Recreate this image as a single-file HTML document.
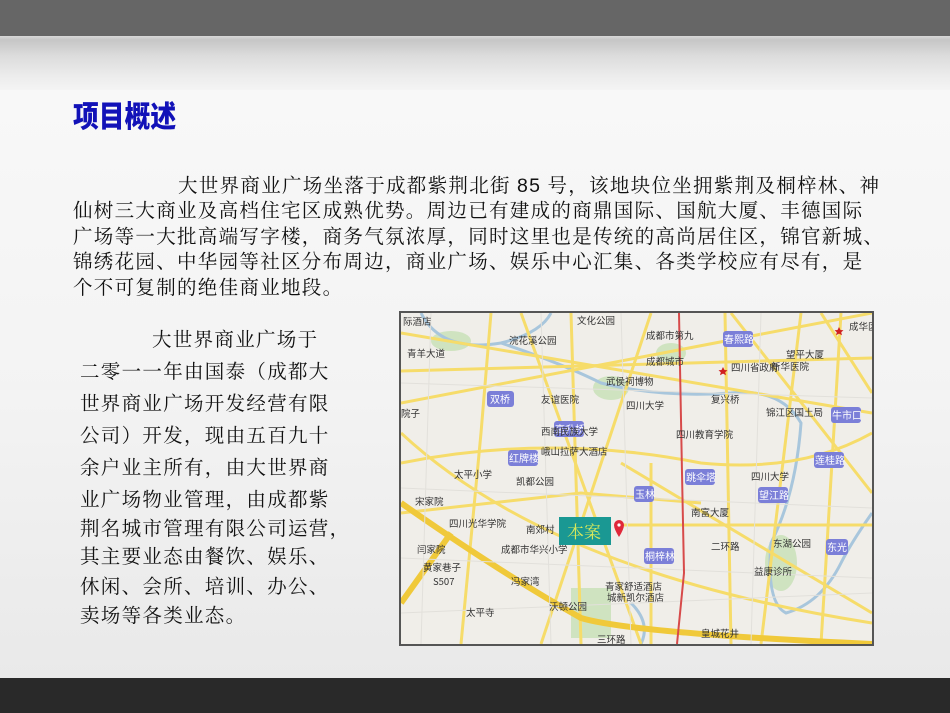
<!DOCTYPE html>
<html><head><meta charset="utf-8"><style>
html,body{margin:0;padding:0}
body{width:950px;height:713px;position:relative;overflow:hidden;background:linear-gradient(#f8f8f8 90px,#f3f3f3 400px,#e9e9e9 678px);font-family:"Liberation Serif","Noto Serif CJK SC",serif;color:#111}
#top1{position:absolute;left:0;top:0;width:950px;height:36px;background:#666}
#top2{position:absolute;left:0;top:36px;width:950px;height:54px;background:linear-gradient(#d8d8d8 0px,#c6c6c6 4px,#dcdcdc 20px,#ececec 40px,#f4f4f4 54px)}
#bot{position:absolute;left:0;top:678px;width:950px;height:35px;background:#292929}
h1{position:absolute;left:73px;top:92px;margin:0;font:900 30px "Noto Sans CJK SC",sans-serif;color:#1212b8;transform:scaleX(0.86);transform-origin:left}
.p{position:absolute;left:73px;font-size:19.5px;letter-spacing:1.3px;white-space:nowrap;line-height:26px}
.l{position:absolute;left:80px;font-size:19.5px;letter-spacing:1.3px;white-space:nowrap;line-height:30px}
.n{font-family:"Liberation Sans",sans-serif}
#map{position:absolute;left:399px;top:311px;width:471px;height:331px;border:2px solid #555;overflow:hidden;background:#f0eee9}
.lab{font:9.5px "Noto Sans CJK SC",sans-serif;fill:#333}
.st{font:10px "Noto Sans CJK SC",sans-serif;fill:#fff}
</style></head><body>
<div id="top1"></div><div id="top2"></div><div id="bot"></div>
<h1>项目概述</h1>
<div class="p" style="top:173px;left:178px">大世界商业广场坐落于成都紫荆北街 <span class="n">85</span> 号，该地块位坐拥紫荆及桐梓林、神</div>
<div class="p" style="top:199px">仙树三大商业及高档住宅区成熟优势。周边已有建成的商鼎国际、国航大厦、丰德国际</div>
<div class="p" style="top:225px">广场等一大批高端写字楼，商务气氛浓厚，同时这里也是传统的高尚居住区，锦官新城、</div>
<div class="p" style="top:250px">锦绣花园、中华园等社区分布周边，商业广场、娱乐中心汇集、各类学校应有尽有，是</div>
<div class="p" style="top:276px">个不可复制的绝佳商业地段。</div>
<div class="l" style="top:326px;left:152px">大世界商业广场于</div>
<div class="l" style="top:358px">二零一一年由国泰（成都大</div>
<div class="l" style="top:390px">世界商业广场开发经营有限</div>
<div class="l" style="top:422px">公司）开发，现由五百九十</div>
<div class="l" style="top:454px">余户业主所有，由大世界商</div>
<div class="l" style="top:486px">业广场物业管理，由成都紫</div>
<div class="l" style="top:515px">荆名城市管理有限公司运营，</div>
<div class="l" style="top:543px">其主要业态由餐饮、娱乐、</div>
<div class="l" style="top:573px">休闲、会所、培训、办公、</div>
<div class="l" style="top:602px">卖场等各类业态。</div>
<div id="map"><svg width="471" height="331" viewBox="0 0 471 331">
<g fill="#cfe3c0"><ellipse cx="50" cy="28" rx="20" ry="10"/><ellipse cx="210" cy="75" rx="18" ry="12"/><ellipse cx="380" cy="250" rx="16" ry="28"/><rect x="170" y="275" width="40" height="50"/><ellipse cx="270" cy="40" rx="15" ry="10"/></g>
<g fill="none" stroke="#a8c6dc" stroke-width="3"><path d="M20 0 Q40 40 100 30 Q140 20 150 0"/><path d="M100 30 Q160 50 200 70 Q260 85 330 80 Q380 75 400 110 Q395 180 370 230 Q365 290 385 300 Q420 290 440 250 Q450 230 471 200"/><path d="M230 290 Q250 310 240 331"/></g>
<g fill="none" stroke="#f6dc6a" stroke-width="3">
<path d="M0 58 L471 45"/><path d="M0 150 Q150 120 300 150 Q400 160 471 120"/><path d="M220 212 L471 212"/><path d="M90 0 L80 120 L60 331"/><path d="M170 0 L180 331"/><path d="M324 0 L330 331"/><path d="M400 0 L360 331"/><path d="M0 90 L471 0"/><path d="M0 200 L180 180 L300 190"/><path d="M0 120 Q150 260 471 310"/><path d="M250 0 L140 331"/><path d="M420 0 L471 80"/><path d="M0 20 L471 100"/><path d="M220 150 L471 300"/><path d="M330 0 L471 180"/><path d="M120 0 L240 331"/><path d="M250 150 L250 331"/><path d="M440 0 L420 331"/>
</g>
<g fill="none" stroke="#f0c93a" stroke-width="6"><path d="M0 190 Q100 260 180 305 Q230 320 471 331"/><path d="M0 290 L50 220"/></g>
<g fill="none" stroke="#e2e0db" stroke-width="1"><path d="M0 70 L471 85 M0 175 L471 195 M140 0 L150 331 M220 0 L230 331 M360 0 L350 331 M0 245 L471 265 M30 0 L20 331 M0 300 L471 280"/></g>
<path d="M278 0 L281 160 L283 260 L276 331" stroke="#d74a4a" stroke-width="2" fill="none"/>
<g fill="#7b7fd8"><rect x="86" y="78" width="27" height="16" rx="3"/><rect x="153" y="108" width="30" height="16" rx="3"/><rect x="107" y="137" width="30" height="16" rx="3"/><rect x="322" y="18" width="30" height="16" rx="3"/><rect x="233" y="173" width="20" height="16" rx="3"/><rect x="284" y="156" width="30" height="16" rx="3"/><rect x="243" y="235" width="30" height="16" rx="3"/><rect x="357" y="174" width="30" height="16" rx="3"/><rect x="430" y="94" width="30" height="16" rx="3"/><rect x="413" y="139" width="30" height="16" rx="3"/><rect x="425" y="226" width="22" height="16" rx="3"/></g>
<g class="st"><text x="89" y="90">双桥</text><text x="154" y="120">高升桥</text><text x="108" y="149">红牌楼</text><text x="323" y="30">春熙路</text><text x="234" y="185">玉林</text><text x="285" y="168">跳伞塔</text><text x="244" y="247">桐梓林</text><text x="358" y="186">望江路</text><text x="431" y="106">牛市口</text><text x="414" y="151">莲桂路</text><text x="426" y="238">东光</text></g>
<g class="lab"><text x="2" y="12">际酒店</text><text x="176" y="11">文化公园</text><text x="108" y="31">浣花溪公园</text><text x="6" y="44">青羊大道</text><text x="245" y="26">成都市第九</text><text x="245" y="52">成都城市</text><text x="205" y="72">武侯祠博物</text><text x="225" y="96">四川大学</text><text x="0" y="104">院子</text><text x="140" y="122">西南民族大学</text><text x="140" y="90">友谊医院</text><text x="140" y="142">峨山拉萨大酒店</text><text x="53" y="165">太平小学</text><text x="115" y="172">凯都公园</text><text x="14" y="192">宋家院</text><text x="48" y="214">四川光华学院</text><text x="100" y="240">成都市华兴小学</text><text x="16" y="240">闫家院</text><text x="22" y="258">黄家巷子</text><text x="110" y="272">冯家湾</text><text x="65" y="303">太平寺</text><text x="204" y="277">青家舒适酒店</text><text x="206" y="288">城新凯尔酒店</text><text x="32" y="272">S507</text><text x="148" y="297">沃顿公园</text><text x="125" y="220">南郊村</text><text x="275" y="125">四川教育学院</text><text x="290" y="203">南富大厦</text><text x="330" y="58">四川省政府</text><text x="370" y="57">新华医院</text><text x="365" y="103">锦江区国土局</text><text x="350" y="167">四川大学</text><text x="372" y="234">东湖公园</text><text x="353" y="262">益康诊所</text><text x="300" y="324">皇城花井</text><text x="310" y="237">二环路</text><text x="196" y="330">三环路</text><text x="448" y="17">成华区政</text><text x="385" y="45">望平大厦</text><text x="310" y="90">复兴桥</text><text x="10" y="90"></text></g>
<rect x="158" y="204" width="52" height="28" fill="#1a9893"/>
<text x="166" y="225" style="font:17px 'Noto Serif CJK SC',serif;fill:#d8e85a">本案</text>
<path d="M213 212 a5 5 0 1 1 10 0 Q223 216 218 224 Q213 216 213 212 Z" fill="#e0283a"/>
<circle cx="218" cy="212" r="1.6" fill="#fff"/>
<path d="M438 14 l1.5 3 3 0.3 -2.3 2 0.8 3 -3 -1.7 -3 1.7 0.8 -3 -2.3 -2 3 -0.3z" fill="#d02020"/>
<path d="M322 54 l1.5 3 3 0.3 -2.3 2 0.8 3 -3 -1.7 -3 1.7 0.8 -3 -2.3 -2 3 -0.3z" fill="#d02020"/>
</svg></div>
</body></html>
